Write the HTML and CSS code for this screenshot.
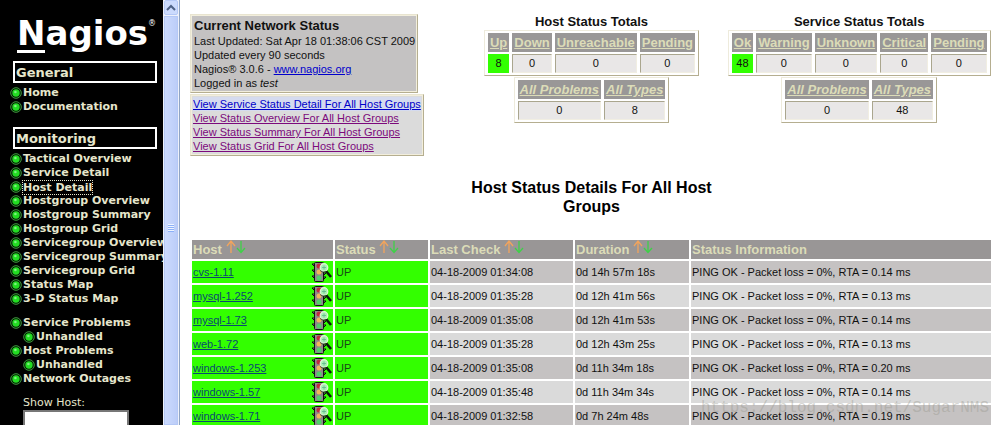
FILE: index.html
```html
<!DOCTYPE html>
<html lang="en">
<head>
<meta charset="utf-8">
<title>Nagios</title>
<link rel="stylesheet" href="styles.css">
</head>
<body>
<svg class="defs" aria-hidden="true">
  <symbol id="dot" viewBox="0 0 12 12">
    <circle cx="6" cy="6" r="5.3" fill="#001a00" stroke="#3f9a3f" stroke-width="1"/>
    <circle cx="6" cy="6" r="3.700" fill="#22dc22"/>
    <circle cx="5.4" cy="5" r="1.3" fill="#7df27d"/>
  </symbol>
  <symbol id="up" viewBox="0 0 10 14">
    <path d="M5 13V2M1 6l4-5 4 5" fill="none" stroke="#f2a45c" stroke-width="1.3"/>
  </symbol>
  <symbol id="down" viewBox="0 0 10 14">
    <path d="M5 1v11M1 8l4 4.500 4-4.500" fill="none" stroke="#3fd048" stroke-width="1.3"/>
  </symbol>
  <symbol id="light" viewBox="0 0 20 20">
    <path d="M3 2H0l3 3M3 8H0l3 3M3 14H0l3 3M11 11h3l-3 3M11 15h3l-3 3" fill="#8a9a8a" stroke="#101010"/>
    <rect x="2.500" y=".5" width="9" height="19" rx="1" fill="#8f8a8a" stroke="#101010"/>
    <circle cx="7" cy="4" r="2.500" fill="#c4283c"/>
    <circle cx="7" cy="10" r="2.500" fill="#f3b45a"/>
    <circle cx="7" cy="16" r="2.500" fill="#4fd069"/>
    <path d="M14 9l5 6" stroke="#0b1a0b" stroke-width="2.600"/>
    <circle cx="12" cy="5.500" r="3.800" fill="#a9f0b4" stroke="#e4f5da" stroke-width="1.200"/>
    <path d="M10 5.500h4M12 3.500v4" stroke="#5fb58a" stroke-width=".8"/>
    <path d="M8 8.500q3 3 6 .8" fill="none" stroke="#243824" stroke-width=".8"/>
  </symbol>
</svg>
<div class="page">
  <nav class="sidebar">
    <div class="logo"><span class="logo-n">N</span>agios<sup>®</sup></div>
    <h2 class="nav-head">General</h2>
    <ul class="nav-list">
      <li><svg class="dot"><use href="#dot"/></svg><a href="#">Home</a></li>
      <li><svg class="dot"><use href="#dot"/></svg><a href="#">Documentation</a></li>
    </ul>
    <h2 class="nav-head">Monitoring</h2>
    <ul class="nav-list">
      <li><svg class="dot"><use href="#dot"/></svg><a href="#">Tactical Overview</a></li>
      <li><svg class="dot"><use href="#dot"/></svg><a href="#">Service Detail</a></li>
      <li><svg class="dot"><use href="#dot"/></svg><a href="#" class="focused">Host Detail</a></li>
      <li><svg class="dot"><use href="#dot"/></svg><a href="#">Hostgroup Overview</a></li>
      <li><svg class="dot"><use href="#dot"/></svg><a href="#">Hostgroup Summary</a></li>
      <li><svg class="dot"><use href="#dot"/></svg><a href="#">Hostgroup Grid</a></li>
      <li><svg class="dot"><use href="#dot"/></svg><a href="#">Servicegroup Overview</a></li>
      <li><svg class="dot"><use href="#dot"/></svg><a href="#">Servicegroup Summary</a></li>
      <li><svg class="dot"><use href="#dot"/></svg><a href="#">Servicegroup Grid</a></li>
      <li><svg class="dot"><use href="#dot"/></svg><a href="#">Status Map</a></li>
      <li><svg class="dot"><use href="#dot"/></svg><a href="#">3-D Status Map</a></li>
    </ul>
    <ul class="nav-list problems">
      <li><svg class="dot"><use href="#dot"/></svg><a href="#">Service Problems</a></li>
      <li class="sub"><svg class="dot"><use href="#dot"/></svg><a href="#">Unhandled</a></li>
      <li><svg class="dot"><use href="#dot"/></svg><a href="#">Host Problems</a></li>
      <li class="sub"><svg class="dot"><use href="#dot"/></svg><a href="#">Unhandled</a></li>
      <li><svg class="dot"><use href="#dot"/></svg><a href="#">Network Outages</a></li>
    </ul>
    <form class="search">
      <label for="host">Show Host:</label>
      <input id="host" type="text">
    </form>
  </nav>
  <div class="scrollbar">
    <button class="scroll-up" type="button" aria-label="Scroll up"><svg viewBox="0 0 10 8"><path d="M1 6l4-4 4 4" fill="none" stroke="#4d6185" stroke-width="2"/></svg></button>
    <div class="thumb"><span class="grip"></span></div>
  </div>
  <main class="main">
    <div class="summary">
      <section class="left">
        <div class="info">
          <h1>Current Network Status</h1>
          <p>Last Updated: Sat Apr 18 01:38:06 CST 2009</p>
          <p>Updated every 90 seconds</p>
          <p>Nagios® 3.0.6 - <a class="site" href="#">www.nagios.org</a></p>
          <p>Logged in as <i>test</i></p>
        </div>
        <div class="views">
          <a class="fresh" href="#">View Service Status Detail For All Host Groups</a>
          <a href="#">View Status Overview For All Host Groups</a>
          <a href="#">View Status Summary For All Host Groups</a>
          <a href="#">View Status Grid For All Host Groups</a>
        </div>
      </section>
      <section class="totals">
        <h2>Host Status Totals</h2>
        <table>
          <tr><th><a href="#">Up</a></th><th><a href="#">Down</a></th><th><a href="#">Unreachable</a></th><th><a href="#">Pending</a></th></tr>
          <tr><td class="ok">8</td><td>0</td><td>0</td><td>0</td></tr>
        </table>
        <table>
          <tr><th><a href="#"><i>All Problems</i></a></th><th><a href="#"><i>All Types</i></a></th></tr>
          <tr><td>0</td><td>8</td></tr>
        </table>
      </section>
      <section class="totals">
        <h2>Service Status Totals</h2>
        <table>
          <tr><th><a href="#">Ok</a></th><th><a href="#">Warning</a></th><th><a href="#">Unknown</a></th><th><a href="#">Critical</a></th><th><a href="#">Pending</a></th></tr>
          <tr><td class="ok">48</td><td>0</td><td>0</td><td>0</td><td>0</td></tr>
        </table>
        <table>
          <tr><th><a href="#"><i>All Problems</i></a></th><th><a href="#"><i>All Types</i></a></th></tr>
          <tr><td>0</td><td>48</td></tr>
        </table>
      </section>
    </div>
    <h2 class="title">Host Status Details For All Host Groups</h2>
    <table class="hosts">
      <colgroup><col class="c-host"><col class="c-status"><col class="c-check"><col class="c-time"><col></colgroup>
      <thead>
        <tr>
          <th>Host <svg class="arrow"><use href="#up"/></svg><svg class="arrow"><use href="#down"/></svg></th>
          <th>Status <svg class="arrow"><use href="#up"/></svg><svg class="arrow"><use href="#down"/></svg></th>
          <th>Last Check <svg class="arrow"><use href="#up"/></svg><svg class="arrow"><use href="#down"/></svg></th>
          <th>Duration <svg class="arrow"><use href="#up"/></svg><svg class="arrow"><use href="#down"/></svg></th>
          <th>Status Information</th>
        </tr>
      </thead>
      <tbody>
        <tr><td class="up"><div class="host"><a href="#">cvs-1.11</a><svg class="light"><use href="#light"/></svg></div></td><td class="up">UP</td><td>04-18-2009 01:34:08</td><td>0d 14h 57m 18s</td><td>PING OK - Packet loss = 0%, RTA = 0.14 ms</td></tr>
        <tr><td class="up"><div class="host"><a href="#">mysql-1.252</a><svg class="light"><use href="#light"/></svg></div></td><td class="up">UP</td><td>04-18-2009 01:35:28</td><td>0d 12h 41m 56s</td><td>PING OK - Packet loss = 0%, RTA = 0.13 ms</td></tr>
        <tr><td class="up"><div class="host"><a href="#">mysql-1.73</a><svg class="light"><use href="#light"/></svg></div></td><td class="up">UP</td><td>04-18-2009 01:35:08</td><td>0d 12h 41m 53s</td><td>PING OK - Packet loss = 0%, RTA = 0.14 ms</td></tr>
        <tr><td class="up"><div class="host"><a href="#">web-1.72</a><svg class="light"><use href="#light"/></svg></div></td><td class="up">UP</td><td>04-18-2009 01:35:28</td><td>0d 12h 43m 25s</td><td>PING OK - Packet loss = 0%, RTA = 0.13 ms</td></tr>
        <tr><td class="up"><div class="host"><a href="#">windows-1.253</a><svg class="light"><use href="#light"/></svg></div></td><td class="up">UP</td><td>04-18-2009 01:35:08</td><td>0d 11h 34m 18s</td><td>PING OK - Packet loss = 0%, RTA = 0.20 ms</td></tr>
        <tr><td class="up"><div class="host"><a href="#">windows-1.57</a><svg class="light"><use href="#light"/></svg></div></td><td class="up">UP</td><td>04-18-2009 01:35:48</td><td>0d 11h 34m 34s</td><td>PING OK - Packet loss = 0%, RTA = 0.14 ms</td></tr>
        <tr><td class="up"><div class="host"><a href="#">windows-1.71</a><svg class="light"><use href="#light"/></svg></div></td><td class="up">UP</td><td>04-18-2009 01:32:58</td><td>0d 7h 24m 48s</td><td>PING OK - Packet loss = 0%, RTA = 0.19 ms</td></tr>
      </tbody>
    </table>
  </main>
  <div class="watermark">https://blog.csdn.net/SugarNMS</div>
</div>
</body>
</html>
```
FILE: styles.css
```css
* { box-sizing: border-box; }
body { margin: 0; background: #fff; color: #111; font: 11px/14px "Liberation Sans", Arial, sans-serif; }
h1, h2, p, ul { margin: 0; padding: 0; }
.defs { position: absolute; width: 0; height: 0; }
.page { position: relative; display: flex; height: 100vh; overflow: hidden; }

.sidebar { flex: 0 0 163px; overflow: hidden; background: #000; color: #e6e6cc; font-family: "DejaVu Sans", Verdana, sans-serif; white-space: nowrap; }
.logo { display: flex; height: 61px; padding: 14px 0 0 17px; color: #fff; font-size: 34px; font-weight: bold; line-height: 38px; }
.logo-n { height: 39px; border-bottom: 3px solid #fff; }
.logo sup { font-size: 8px; line-height: 20px; font-weight: normal; }
.nav-head { height: 22px; margin: 0 6px 0 13px; padding: 0 1px; border: 2px solid #fff; color: #e6e6cc; font-size: 13px; line-height: 19px; }
.nav-list { margin: 3px 0 13px; padding-left: 10px; list-style: none; font-size: 11px; font-weight: bold; }
.nav-list li { display: flex; align-items: center; gap: 1px; height: 14px; }
.nav-list a { color: inherit; text-decoration: none; line-height: 14px; }
.nav-list .focused { height: 13px; outline: 1px dotted #e6e6cc; line-height: 13px; }
.nav-list .sub { padding-left: 13px; }
.nav-list.problems { margin: -3px 0 10px; }
.dot { flex: none; width: 12px; height: 12px; }
.search { display: flex; flex-direction: column; padding-left: 23px; font-size: 11px; }
.search input { width: 106px; height: 22px; border: 2px solid #777; background: #fff; }

.scrollbar { flex: 0 0 17px; display: flex; flex-direction: column; gap: 1px; padding: 0 1px; background: #eef1fb; border-right: 1px solid #8fa4c4; }
.scroll-up { display: grid; place-items: center; height: 15px; padding: 0; border: 1px solid #b4c8f6; border-radius: 2px; background: #cbdafd; }
.scroll-up svg { width: 10px; height: 8px; }
.thumb { flex: 1; display: grid; place-items: center; padding-top: 14px; border: 1px solid #b4c8f6; background: linear-gradient(90deg, #cbdafe, #bccdf8); }
.grip { width: 6px; height: 8px; background: repeating-linear-gradient(#eef4fe 0 1px, #8cb0f8 1px 2px); }

.main { flex: 1; padding: 14px 7px 0 10px; }
.summary { display: grid; grid-template-columns: repeat(3, minmax(0, 1fr)); height: 164px; }
.left { display: flex; flex-direction: column; align-items: flex-start; gap: 1px; }
.info, .views { padding: 2px; border: 1px solid; border-color: #e8e4d0 #b5ae90 #b5ae90 #e8e4d0; outline: 1px solid #f2eedc; outline-offset: -2px; background: #c4c2c2; white-space: nowrap; }
.info { padding-left: 3px; }
.info h1 { font-size: 13px; line-height: 17px; }
.site { color: #00c; }
.views { display: flex; flex-direction: column; background: #dbdbdb; }
.views a { color: #7c0a7c; }
.views .fresh { color: #0000c8; background: #d5dbef; }

.totals { display: flex; flex-direction: column; align-items: center; }
.totals h2 { font-size: 13px; line-height: 16px; }
.totals table { border: 1px solid; border-color: #eeebdc #b5ae90 #b5ae90 #eeebdc; border-spacing: 3px 2px; text-align: center; margin-bottom: 1px; }
.totals th { height: 19px; padding: 0 2px; background: #999797; color: #dcdcb8; font-size: 13px; line-height: 19px; }
.totals a { color: inherit; }
.totals td { height: 19px; padding: 0 3px; border: 1px solid; border-color: #aaa68e #f1eee2 #f1eee2 #aaa68e; background: #e9e7e7; line-height: 17px; }
.totals .ok { background: #3f0; border-color: #3f0; }

.title { width: 260px; margin: 0 auto 22px; color: #000; font-size: 16px; line-height: 19px; text-align: center; }

.hosts { width: 100%; table-layout: fixed; border-spacing: 2px; white-space: nowrap; }
.c-host { width: 141px; }
.c-status { width: 93px; }
.c-check { width: 143px; }
.c-time { width: 114px; }
.hosts th { height: 19px; padding: 0 1px; background: #999696; color: #dcdcb8; font-size: 13px; line-height: 19px; text-align: left; }
.hosts td { height: 22px; padding: 0 1px; background: #dadada; }
.hosts tr:nth-child(odd) td { background: #c5c2c2; }
.hosts tbody tr .up, .hosts tbody tr:nth-child(odd) .up { background: #3f0; color: #174a17; }
.arrow { width: 10px; height: 14px; }
.host { display: flex; align-items: center; justify-content: space-between; }
.host a { color: #0a4a70; }
.light { width: 20px; height: 20px; }

.watermark { position: absolute; right: 11px; bottom: 8px; color: rgba(150, 150, 140, .4); font: 16px/18px "Liberation Mono", monospace; }
```
